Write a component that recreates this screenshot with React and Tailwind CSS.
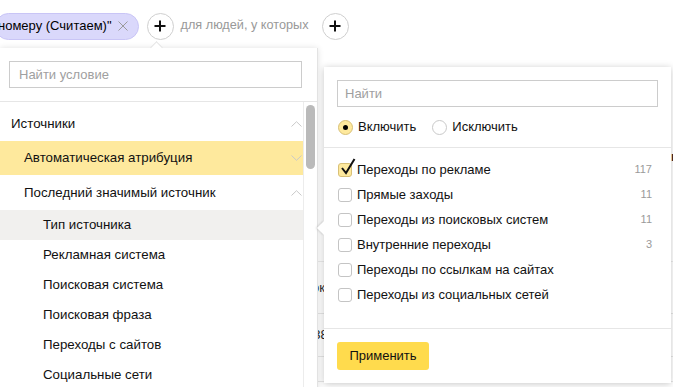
import React from 'react';

const ChevronUp = () => (
  <svg width="11" height="6" viewBox="0 0 11 6" fill="none">
    <path d="M0.5 5.5 L5.5 0.7 L10.5 5.5" stroke="#c9c9c9" strokeWidth="1" />
  </svg>
);

const ChevronDown = () => (
  <svg width="11" height="6" viewBox="0 0 11 6" fill="none">
    <path d="M0.5 0.5 L5.5 5.3 L10.5 0.5" stroke="#c9c9c9" strokeWidth="1" />
  </svg>
);

const PlusButton = () => (
  <div className="flex items-center justify-center w-[27px] h-[27px] rounded-full border border-[#cfcfcf] bg-white">
    <svg width="12" height="12" viewBox="0 0 12 12">
      <path d="M6 0.5 V11.5 M0.5 6 H11.5" stroke="#111" strokeWidth="2" />
    </svg>
  </div>
);

const TopBar = () => (
  <div className="flex items-center h-[52px] text-[13px]">
    <div className="flex items-center h-[27px] pl-[2px] pr-[10px] -ml-[5px] mr-[8px] rounded-full bg-[#dad8fb] border border-[#c9c5f6] text-black">
      <span>номеру (Считаем)"</span>
      <svg className="ml-[6px]" width="10" height="10" viewBox="0 0 10 10">
        <path d="M0.5 0.5 L9.5 9.5 M9.5 0.5 L0.5 9.5" stroke="#9a9a9a" strokeWidth="1" />
      </svg>
    </div>
    <PlusButton />
    <span className="ml-[7px] mr-[13px] text-[12.7px] text-[#999]">для людей, у которых</span>
    <PlusButton />
  </div>
);

const sections = [
  { text: 'Источники', indent: 'pl-[11px]', h: 'h-[34px]', chevron: 'up' },
  { text: 'Автоматическая атрибуция', indent: 'pl-[24px]', h: 'h-[34px]', chevron: 'down', active: true },
  { text: 'Последний значимый источник', indent: 'pl-[24px]', h: 'h-[35px]', chevron: 'up' },
  { text: 'Тип источника', indent: 'pl-[43px]', h: 'h-[30px]', hover: true },
  { text: 'Рекламная система', indent: 'pl-[43px]', h: 'h-[30px]' },
  { text: 'Поисковая система', indent: 'pl-[43px]', h: 'h-[30px]' },
  { text: 'Поисковая фраза', indent: 'pl-[43px]', h: 'h-[30px]' },
  { text: 'Переходы с сайтов', indent: 'pl-[43px]', h: 'h-[30px]' },
  { text: 'Социальные сети', indent: 'pl-[43px]', h: 'h-[30px]' },
];

const ConditionsPanel = () => (
  <div className="absolute left-0 top-[48px] w-[318px] h-[345px] bg-white border-r border-[#e3e3e3] shadow-[0_0_6px_rgba(0,0,0,0.12)] z-10">
    <div className="absolute -top-[5px] left-[152px] w-[9px] h-[9px] rotate-45 bg-white border-l border-t border-[#e3e3e3]" />
    <div className="relative pt-[13px] pl-[9px] pb-[13px] pr-[15px] bg-transparent">
      <div className="flex items-center h-[27px] w-[293px] border border-[#cccccc] px-[9px] text-[13px] text-[#a0a0a0]">
        Найти условие
      </div>
    </div>
    <div className="flex border-t border-[#e6e6e6]">
      <div className="w-[303px] pt-[5px]">
        {sections.map((s) => (
          <div
            key={s.text}
            className={`flex items-center justify-between pr-[1px] text-[13.3px] text-[#111] ${s.h} ${s.indent} ${s.active ? 'bg-[#fee99d]' : ''} ${s.hover ? 'bg-[#f1f0ee]' : ''}`}
          >
            <span>{s.text}</span>
            {s.chevron === 'up' && <ChevronUp />}
            {s.chevron === 'down' && <ChevronDown />}
          </div>
        ))}
      </div>
      <div className="w-[14px] border-l border-[#ececec] pt-[3px] pl-[2px]">
        <div className="w-[9px] h-[64px] rounded-full bg-[#bababa]" />
      </div>
    </div>
  </div>
);

const items = [
  { text: 'Переходы по рекламе', count: '117', checked: true },
  { text: 'Прямые заходы', count: '11' },
  { text: 'Переходы из поисковых систем', count: '11' },
  { text: 'Внутренние переходы', count: '3' },
  { text: 'Переходы по ссылкам на сайтах' },
  { text: 'Переходы из социальных сетей' },
];

const Checkbox = ({ checked }) => (
  <div className={`relative w-[14px] h-[14px] rounded-[3px] border ${checked ? 'bg-[#fee99d] border-[#d8c077]' : 'bg-white border-[#c4c4c4]'}`}>
    {checked && (
      <svg className="absolute -top-[6px] left-[1px]" width="16" height="18" viewBox="0 0 16 18" fill="none">
        <path d="M2 10 L6 15 L14.5 1" stroke="#111" strokeWidth="2" />
      </svg>
    )}
  </div>
);

const Radio = ({ checked }) => (
  <div className={`flex items-center justify-center w-[15px] h-[15px] rounded-full border ${checked ? 'bg-[#fee99d] border-[#d8c077]' : 'bg-white border-[#c9c9c9]'}`}>
    {checked && <div className="w-[5px] h-[5px] rounded-full bg-black" />}
  </div>
);

const ValuesPopup = () => (
  <div className="absolute left-[324px] top-[67px] w-[347px] h-[316px] bg-white shadow-[0_1px_7px_rgba(0,0,0,0.22)] z-20 font-['Liberation_Sans',sans-serif] text-[13px] text-[#111]">
    <div className="absolute top-[156px] -left-[5px] w-[10px] h-[10px] rotate-45 bg-white shadow-[-1px_1px_2px_rgba(0,0,0,0.12)]" />
    <div className="relative bg-white px-[13px] pt-[13px]">
      <div className="flex items-center h-[27px] border border-[#cccccc] px-[7px] text-[#a0a0a0]">Найти</div>
      <div className="flex items-center h-[40px] gap-[5px] pl-[1px]">
        <Radio checked />
        <span className="mr-[11px]">Включить</span>
        <Radio />
        <span>Исключить</span>
      </div>
    </div>
    <div className="relative border-t border-[#e6e6e6] pt-[9px] pl-[14px] pr-[19px] h-[181px] bg-white">
      {items.map((it) => (
        <div key={it.text} className="flex items-center h-[25px] gap-[5px]">
          <Checkbox checked={it.checked} />
          <span className="flex-1">{it.text}</span>
          <span className="text-[11px] text-[#9a9a9a]">{it.count}</span>
        </div>
      ))}
    </div>
    <div className="border-t border-[#e6e6e6] px-[13px] pt-[13px]">
      <div className="flex items-center justify-center w-[92px] h-[28px] rounded-[3px] bg-[#ffdb4d] text-[#111]">Применить</div>
    </div>
  </div>
);

const BackgroundTable = () => (
  <div className="ml-[300px] text-[13px] text-[#222]">
    <div className="flex items-start justify-end h-[210px] border-b border-[#ececec] pt-[95px] pr-[0px] font-bold">
      <span className="-mr-[6px]">Ви</span>
    </div>
    <div className="flex items-center h-[52px] border-b border-[#e6e6e6] pl-[4px] text-[#333]">Рок</div>
    <div className="flex items-center h-[43px] border-b border-[#e6e6e6] pl-[6px]">1388</div>
    <div className="h-[25px] border-b border-[#e6e6e6]" />
    <div className="flex items-center h-[50px] border-b border-[#e6e6e6] pl-[6px]">1389</div>
  </div>
);

export default function App() {
  return (
    <div className="relative w-[673px] h-[387px] overflow-hidden bg-white font-['Liberation_Sans',sans-serif]">
      <TopBar />
      <BackgroundTable />
      <ConditionsPanel />
      <ValuesPopup />
    </div>
  );
}
